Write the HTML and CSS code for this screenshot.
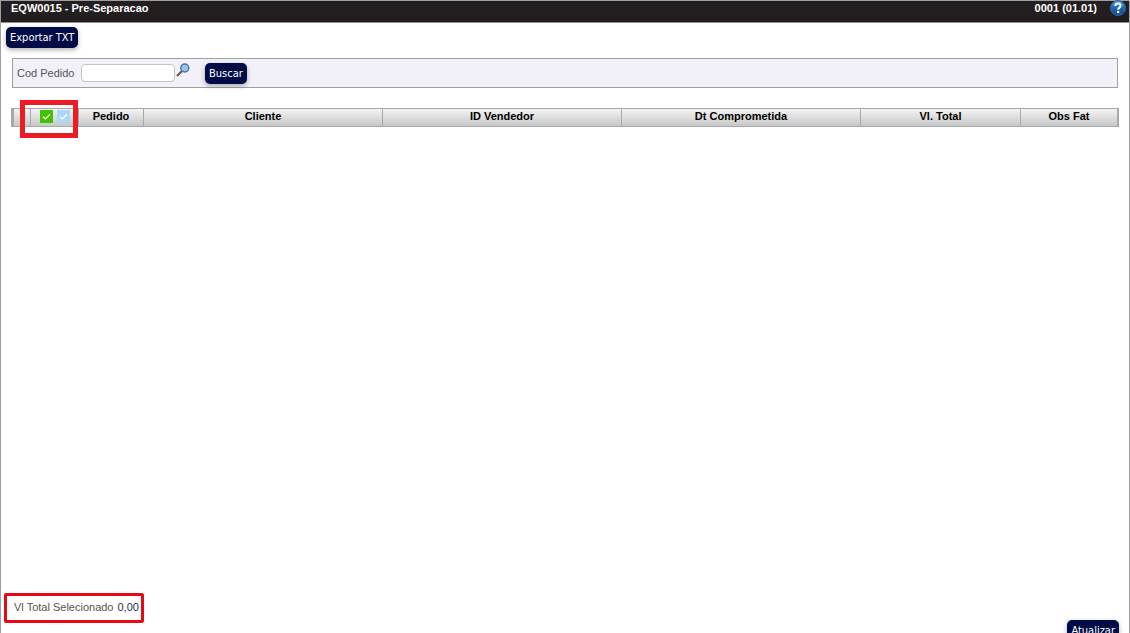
FILE: index.html
```html
<!DOCTYPE html>
<html lang="pt-BR">
<head>
<meta charset="utf-8">
<title>EQW0015 - Pre-Separacao</title>
<link rel="stylesheet" href="styles.css">
</head>
<body>
<div class="app">
  <header class="titlebar">
    <h1 class="title">EQW0015 - Pre-Separacao</h1>
    <span class="version">0001 (01.01)</span>
    <button class="icon-button help" type="button" aria-label="Ajuda">
      <svg width="16" height="16" viewBox="0 0 16 16">
        <defs><linearGradient id="ball" x1="0" y1="0" x2="0" y2="1"><stop offset="0" stop-color="#5d9bd8"/><stop offset="0.5" stop-color="#2465ae"/><stop offset="1" stop-color="#164a8c"/></linearGradient></defs>
        <circle cx="8" cy="8" r="7.5" fill="url(#ball)" stroke="#2c66a8"/>
        <path d="M5.4 6C5.4 2.8 10.7 2.9 10.6 5.8C10.5 7.6 8.1 7.7 8.1 9.7" fill="none" stroke="#fff" stroke-width="2"/>
        <rect x="7" y="11" width="2.2" height="2.1" fill="#fff"/>
      </svg>
    </button>
  </header>
  <div class="toolbar"><button class="button" type="button">Exportar TXT</button></div>
  <form class="filter">
    <label class="filter-label" for="pedido">Cod Pedido</label>
    <input class="filter-input" id="pedido" type="text">
    <button class="icon-button lookup" type="button" aria-label="Pesquisar pedido">
      <svg width="14" height="14" viewBox="0 0 14 14">
        <path d="M1 13L6 8" stroke="#65594e" stroke-width="2.2"/>
        <circle cx="8.8" cy="5" r="4" fill="#91c4fa" stroke="#56708f" stroke-width="1.4"/>
      </svg>
    </button>
    <button class="button" type="button">Buscar</button>
  </form>
  <main class="content">
    <table class="grid">
      <colgroup><col class="col-mark"><col class="col-select"><col class="col-order"><col class="col-wide"><col class="col-wide"><col class="col-wide"><col class="col-total"><col class="col-notes"></colgroup>
      <thead>
        <tr>
          <th></th>
          <th>
            <div class="checks">
              <button class="icon-button check check-all" type="button" aria-label="Marcar todos"><svg width="13" height="13" viewBox="0 0 13 13"><path d="M3 6.7L5.3 8.9L10 4.3" fill="none" stroke="#fff" stroke-width="1.2"/></svg></button>
              <button class="icon-button check check-none" type="button" aria-label="Desmarcar todos"><svg width="13" height="13" viewBox="0 0 13 13"><path d="M3 6.7L5.3 8.9L10 4.3" fill="none" stroke="#fff" stroke-width="1.2"/></svg></button>
            </div>
          </th>
          <th>Pedido</th><th>Cliente</th><th>ID Vendedor</th><th>Dt Comprometida</th><th>Vl. Total</th><th>Obs Fat</th>
        </tr>
      </thead>
    </table>
    <div class="highlight"></div>
  </main>
  <div class="summary"><span>Vl Total Selecionado</span><span class="amount">0,00</span></div>
  <footer class="actions"><button class="button" type="button">Atualizar</button></footer>
</div>
</body>
</html>
```
FILE: styles.css
```css
* { box-sizing: border-box; }
body {
  margin: 0;
  height: 100vh;
  overflow: hidden;
  background: #fff;
  font-family: "Liberation Sans", Arial, sans-serif;
  font-size: 11px;
  color: #555;
}
.app {
  display: flex;
  flex-direction: column;
  height: calc(100vh + 8px);
  border: solid #a0a0a0;
  border-width: 1px 1px 0;
}
.titlebar {
  display: flex;
  align-items: center;
  height: 22px;
  padding: 0 3px 7px 10px;
  background: #231f20;
  border-bottom: 1px solid #8c8c8c;
  color: #fff;
  font-weight: bold;
}
.title { margin: 0; font-size: 11px; }
.version { margin-left: auto; margin-right: 13px; }
.icon-button {
  display: flex;
  padding: 0;
  border: 0;
  background: none;
}
.toolbar { padding: 4px 5px 0; height: 35px; }
.button {
  display: block;
  height: 21px;
  padding: 0 4px;
  border: 0;
  border-radius: 5px;
  background: #000c45;
  box-shadow: 0 2px 5px #0000004d;
  color: #fff;
  font: 11px "DejaVu Sans Condensed", "DejaVu Sans", sans-serif;
  white-space: nowrap;
}
.filter {
  display: flex;
  align-items: center;
  height: 30px;
  margin: 0 11px;
  padding: 0 4px;
  border: 1px solid #a0a0a0;
  background: #f2f0f8;
}
.filter-label { width: 64px; }
.filter-input {
  width: 94px;
  height: 18px;
  border: 1px solid #c4c4c4;
  border-radius: 4px;
  background: #fff;
  font: inherit;
}
.lookup { margin: 0 15px 6px 1px; }
.content {
  position: relative;
  flex: 1;
  padding: 20px 10px 0;
}
.grid {
  width: 100%;
  table-layout: fixed;
  border-collapse: separate;
  border-spacing: 0;
  border: 1px solid #a5a9ae;
  border-width: 1px 2px 1px 3px;
  background: linear-gradient(#f3f3f3, #c8c8c8);
  color: #000;
}
.grid th {
  height: 17px;
  padding: 0 0 2px;
  border-right: 1px solid #a5a9ae;
  line-height: 15px;
}
.grid th:last-child { border-right: 0; }
.col-mark { width: 17px; }
.col-select { width: 48px; }
.col-order { width: 65px; }
.col-total { width: 160px; }
.col-notes { width: 96px; }
.checks {
  display: flex;
  justify-content: center;
  gap: 4px;
}
.check-all { background: #43c000; }
.check-none { background: #add8f5; }
.highlight {
  position: absolute;
  top: 12px;
  left: 19px;
  width: 58px;
  height: 38px;
  border: 5px solid #ed1c24;
  pointer-events: none;
}
.summary {
  display: flex;
  align-self: flex-start;
  align-items: center;
  gap: 4px;
  height: 30px;
  margin-left: 3px;
  padding: 0 2px 3px 7px;
  border: 3px solid #e60a14;
  border-radius: 2px;
}
.amount { color: #1c2f5c; }
.actions {
  display: flex;
  justify-content: flex-end;
  height: 21px;
  margin: -3px 10px 0;
}
```
